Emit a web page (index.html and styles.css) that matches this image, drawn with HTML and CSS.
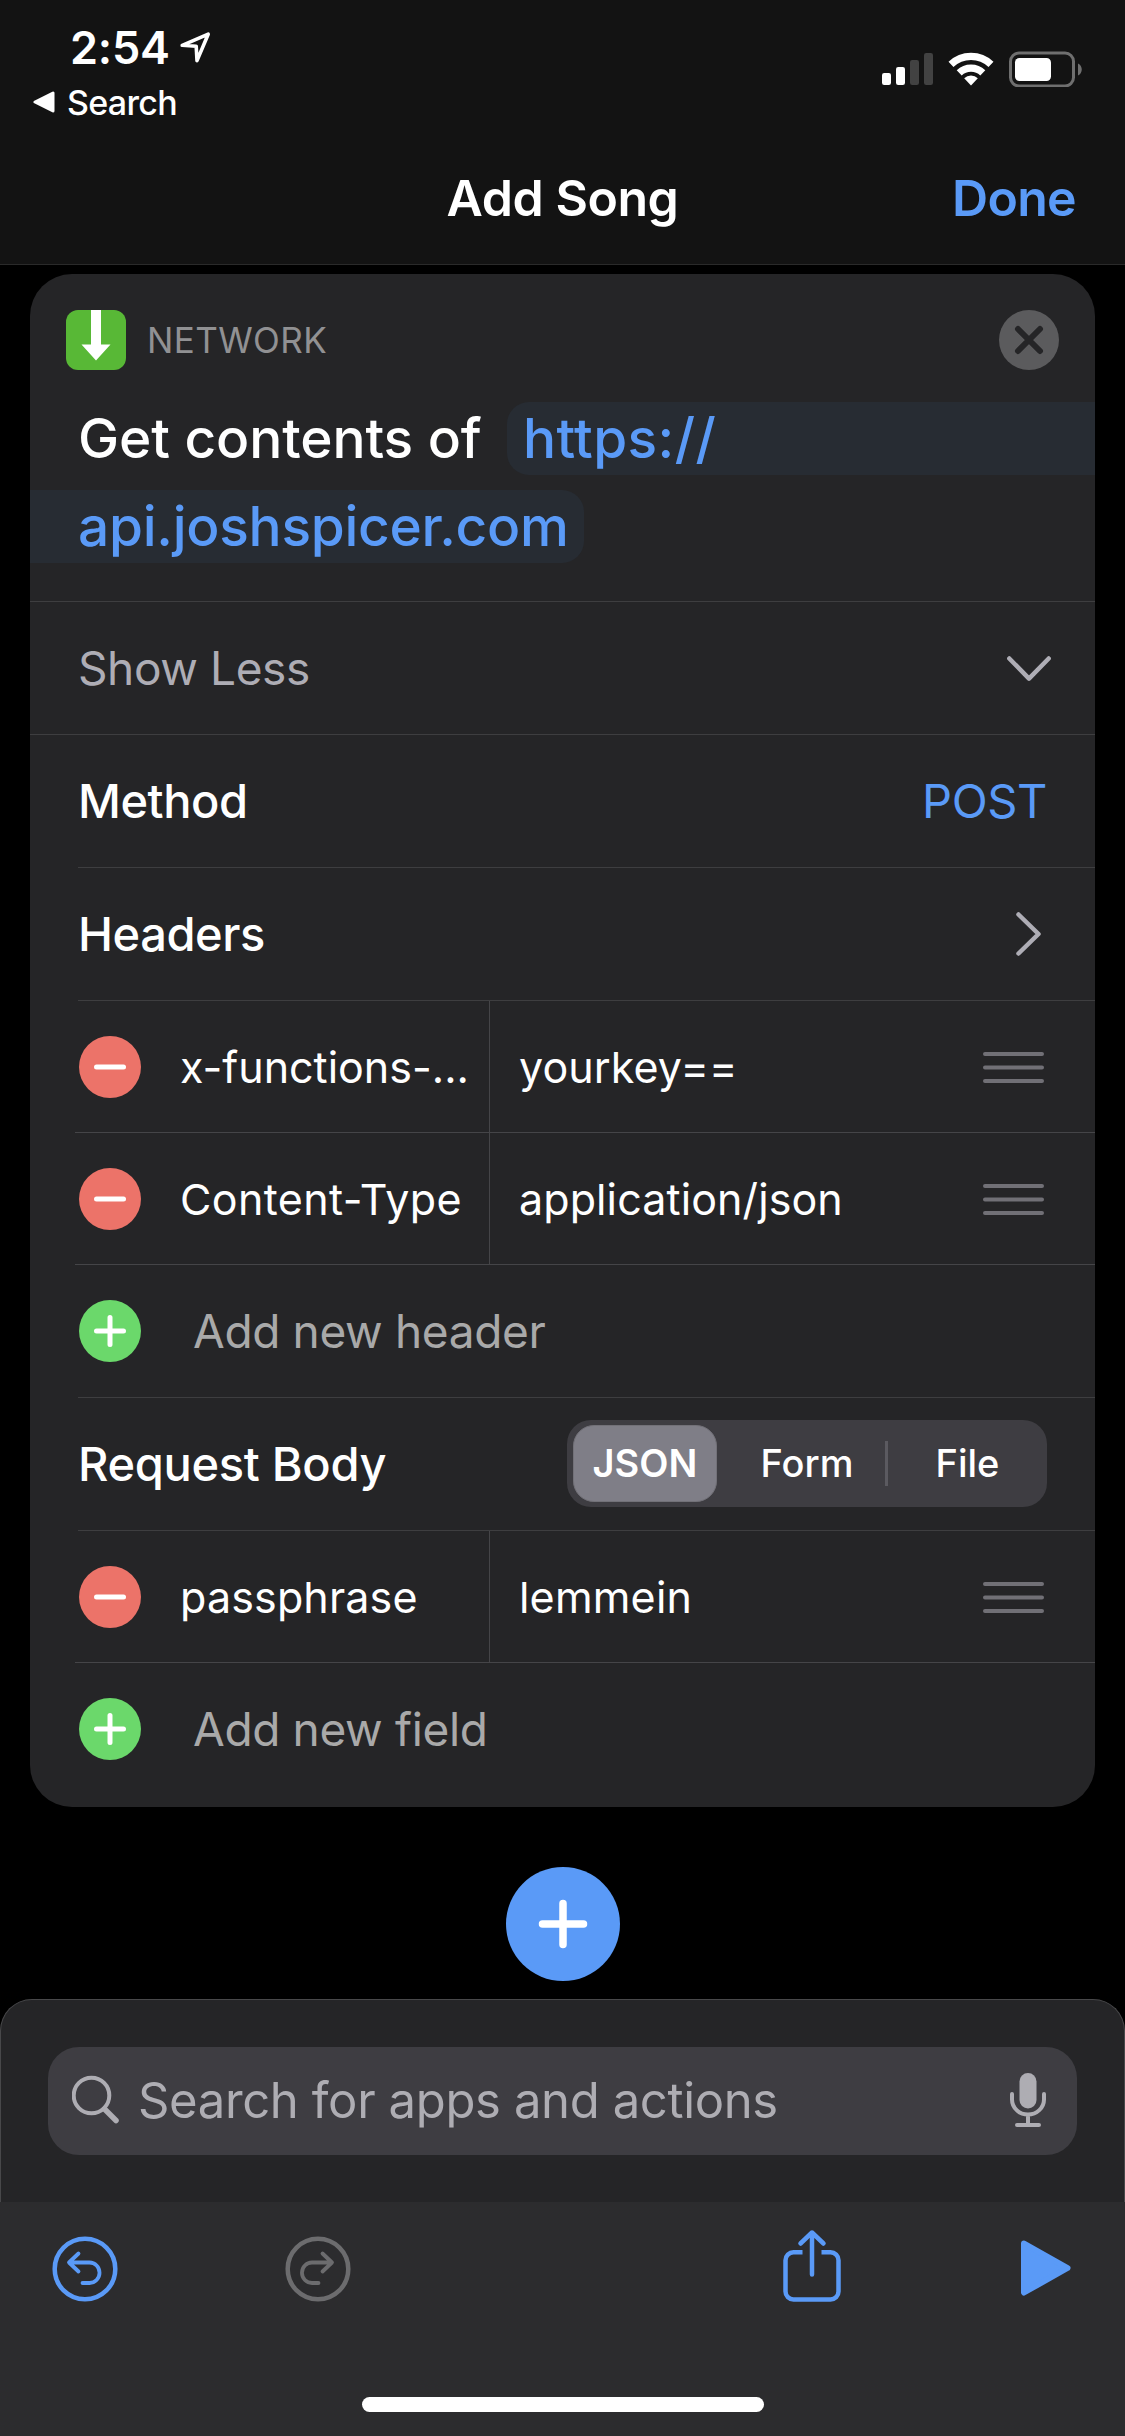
FILE: index.html
```html
<!DOCTYPE html>
<html lang="en">
<head>
<meta charset="utf-8">
<title>Add Song</title>
<link rel="stylesheet" href="styles.css">
</head>
<body>
<svg class="defs" aria-hidden="true">
  <symbol id="minus" viewBox="0 0 62 62"><circle cx="31" cy="31" r="31" fill="#ec7369"/><path d="M17.5 31h27" stroke="#fff" stroke-width="5" stroke-linecap="round"/></symbol>
  <symbol id="plus" viewBox="0 0 62 62"><circle cx="31" cy="31" r="31" fill="#6bd86b"/><path d="M17.5 31h27M31 17.5v27" stroke="#fff" stroke-width="5" stroke-linecap="round"/></symbol>
  <symbol id="drag" viewBox="0 0 61 31"><path d="M2 2h57M2 15.5h57M2 29h57" stroke="#717076" stroke-width="4" stroke-linecap="round"/></symbol>
</svg>
<header class="header">
  <div class="status">
    <div class="status-left">
      <div class="clock"><span>2:54</span>
        <svg width="32" height="32" viewBox="0 0 32 32" fill="none" stroke="#fff" stroke-width="3.6" stroke-linejoin="round"><path d="M2.2 14.3 28.2 3.2 17 29.600 16.200 15.200Z"/></svg>
      </div>
      <div class="back">
        <svg width="22" height="22" viewBox="0 0 22 22"><path d="M2 11 20 2v18Z" fill="#fff" stroke="#fff" stroke-width="3" stroke-linejoin="round"/></svg>
        <span>Search</span>
      </div>
    </div>
    <div class="status-right">
      <svg width="51" height="32" viewBox="0 0 51 32"><g fill="#fff"><rect y="20" width="9" height="12" rx="2.2"/><rect x="14" y="14" width="9" height="18" rx="2.2"/></g><g fill="#424242"><rect x="28" y="7" width="9" height="25" rx="2.2"/><rect x="42" width="9" height="32" rx="2.2"/></g></svg>
      <svg class="wifi" width="46" height="34" viewBox="0 0 46 34"><g fill="none" stroke="#fff" stroke-width="7.2"><path d="M3 12.3a29 29 0 0 1 40 0"/><path d="M11.2 20.8a17 17 0 0 1 23.6 0"/></g><path d="M23 33.5 16.2 26.2a9.6 9.6 0 0 1 13.6 0Z" fill="#fff"/></svg>
      <svg width="74" height="36" viewBox="0 0 74 36"><rect x="1.5" y="2" width="63" height="33" rx="8.5" fill="none" stroke="#6f6f6f" stroke-width="3"/><rect x="6" y="7" width="36" height="23" rx="4.5" fill="#fff"/><path d="M69 12.5c5 2 5 10 0 12Z" fill="#6f6f6f"/></svg>
    </div>
  </div>
  <div class="titlebar">
    <h1 class="title">Add Song</h1>
    <span class="done">Done</span>
  </div>
</header>

<main class="card">
  <div class="card-head">
    <svg width="60" height="60" viewBox="0 0 60 60"><rect width="60" height="60" rx="12" fill="#58b836"/><path d="M25 0h10v34.5h9.5L30 50.500 15.500 34.500H25Z" fill="#fff"/></svg>
    <span class="category">NETWORK</span>
    <svg class="close" width="60" height="60" viewBox="0 0 60 60"><circle cx="30" cy="30" r="30" fill="#5b5b5d"/><path d="M19 19l22 22M41 19 19 41" stroke="#252527" stroke-width="6" stroke-linecap="round"/></svg>
  </div>
  <div class="summary">
    <div class="summary-line"><span class="lead">Get contents of</span><span class="chip chip-start">https://</span></div>
    <div class="summary-line"><span class="chip chip-end">api.joshspicer.com</span></div>
  </div>
  <div class="row full">
    <span class="toggle">Show Less</span>
    <svg class="down" width="44" height="26" viewBox="0 0 44 26" fill="none" stroke="#aeadb5" stroke-width="4.500" stroke-linecap="round" stroke-linejoin="round"><path d="M2.300 2.500 22 22.600 41.700 2.500"/></svg>
  </div>
  <div class="row full"><span class="label">Method</span><span class="value-link">POST</span></div>
  <div class="row"><span class="label headers">Headers</span>
    <svg class="right" width="25" height="44" viewBox="0 0 25 44" fill="none" stroke="#aeadb5" stroke-width="4.500" stroke-linecap="round" stroke-linejoin="round"><path d="M2.500 2.500 22.500 22 2.500 41.500"/></svg>
  </div>
  <div class="row pair short">
    <svg class="badge"><use href="#minus"/></svg><span class="key k1">x-functions-...</span><span class="val">yourkey==</span><svg class="drag"><use href="#drag"/></svg>
  </div>
  <div class="row pair short wide">
    <svg class="badge"><use href="#minus"/></svg><span class="key k2">Content-Type</span><span class="val">application/json</span><svg class="drag"><use href="#drag"/></svg>
  </div>
  <div class="row wide">
    <svg class="badge"><use href="#plus"/></svg><span class="add">Add new header</span>
  </div>
  <div class="row">
    <span class="label body-label">Request Body</span>
    <div class="segments">
      <span class="segment selected">JSON</span><span class="segment form">Form</span><span class="segment file">File</span>
    </div>
  </div>
  <div class="row pair short">
    <svg class="badge"><use href="#minus"/></svg><span class="key k3">passphrase</span><span class="val v3">lemmein</span><svg class="drag"><use href="#drag"/></svg>
  </div>
  <div class="row wide">
    <svg class="badge"><use href="#plus"/></svg><span class="add">Add new field</span>
  </div>
</main>

<div class="add-action">
  <svg width="114" height="114" viewBox="0 0 114 114"><circle cx="57" cy="57" r="57" fill="#5a9af7"/><path d="M36.500 57h41M57 36.500v41" stroke="#fff" stroke-width="7.500" stroke-linecap="round"/></svg>
</div>

<section class="drawer">
  <div class="search">
    <svg width="48" height="50" viewBox="0 0 48 50" fill="none" stroke="#aeadb3" stroke-linecap="round"><circle cx="19.500" cy="20.500" r="17.800" stroke-width="4"/><path d="M32.500 34 44 45.500" stroke-width="5.500"/></svg>
    <span>Search for apps and actions</span>
    <svg class="mic" width="36" height="56" viewBox="0 0 36 56"><rect x="9.500" y="1" width="17" height="35.500" rx="8.500" fill="#aeadb3"/><path d="M2 22v5.500a16 15 0 0 0 32 0V22M18 43v9M7 53h22" fill="none" stroke="#aeadb3" stroke-width="4" stroke-linecap="round"/></svg>
  </div>
</section>

<footer class="footer">
  <div class="tools">
    <svg class="undo" width="66" height="66" viewBox="0 0 66 66" fill="none" stroke="#5a9af7" stroke-width="4.500" stroke-linecap="round" stroke-linejoin="round"><circle cx="33" cy="33" r="30.300"/><path d="M26.500 17.500 17 26.500 26.500 35.500M18 26.500H37.500a9.800 10 0 0 1 0 20.500H30.500" stroke-width="3.800"/></svg>
    <svg class="redo" width="66" height="66" viewBox="0 0 66 66" fill="none" stroke="#6c6c6e" stroke-width="4.500" stroke-linecap="round" stroke-linejoin="round"><circle cx="33" cy="33" r="30.300"/><path d="M37.500 17.500 47 26.500 37.500 35.500M46 26.500H27a9.800 10 0 0 0 0 20.500H33.500" stroke-width="3.800"/></svg>
    <svg class="share" width="58" height="74" viewBox="0 0 58 74" fill="none" stroke="#5a9af7" stroke-width="4.500"><path d="M19.500 23.300H10.500a8 8 0 0 0-8 8V62.500a8 8 0 0 0 8 8h37a8 8 0 0 0 8-8V31.300a8 8 0 0 0-8-8H38.500"/><path d="M29 3.500V45.500M17.500 14.500 29 3.500 40.500 14.500" stroke-linecap="round" stroke-linejoin="round"/></svg>
    <svg class="play" width="50" height="56" viewBox="0 0 50 56"><path d="M3 3.500 46.500 28 3 52.500Z" fill="#5a9af7" stroke="#5a9af7" stroke-width="6" stroke-linejoin="round"/></svg>
  </div>
  <div class="home"></div>
</footer>
</body>
</html>
```
FILE: styles.css
```css
* { box-sizing: border-box; }

body {
  margin: 0;
  width: 1125px;
  height: 2436px;
  display: flex;
  flex-direction: column;
  overflow: hidden;
  background: #000;
  color: #fff;
  font-family: Inter, "Liberation Sans", sans-serif;
}

svg { display: block; flex: none; }
span { white-space: nowrap; }
.defs { position: absolute; width: 0; height: 0; }

/* status bar and navigation */
.header {
  height: 265px;
  background: #131313;
  border-bottom: 1px solid #2a2a2a;
}
.status {
  height: 132px;
  display: flex;
  justify-content: space-between;
}
.status-left { padding-top: 20px; }
.clock {
  display: flex;
  align-items: center;
  gap: 10px;
  height: 54px;
  padding-left: 70px;
  font-size: 45px;
  font-weight: 600;
  letter-spacing: -0.23px;
}
.back {
  display: flex;
  align-items: center;
  gap: 12px;
  height: 40px;
  margin-top: 8px;
  padding-left: 33px;
  font-size: 34px;
  font-weight: 500;
  letter-spacing: -0.7px;
}
.status-right {
  display: flex;
  align-items: flex-start;
  padding: 51px 42px 0 0;
}
.status-right svg:first-child { margin-top: 2px; }
.wifi { margin: 1px 15px 0; }
.titlebar {
  height: 132px;
  display: grid;
  grid-template-columns: 1fr auto 1fr;
  align-items: center;
  padding-right: 49px;
  padding-left: 49px;
  font-size: 50px;
  font-weight: 600;
}
.title {
  grid-column: 2;
  margin: 0;
  font-size: 50px;
  font-weight: 600;
  letter-spacing: -0.45px;
}
.done {
  justify-self: end;
  color: #5a9af7;
  letter-spacing: -0.7px;
}

/* action card */
.card {
  height: 1533px;
  margin: 9px 30px 0;
  padding-top: 36px;
  border-radius: 42px;
  overflow: hidden;
  background: #252527;
}
.card-head {
  height: 60px;
  padding: 0 36px;
  display: flex;
  align-items: center;
}
.category {
  margin-left: 21px;
  color: #919193;
  font-size: 35px;
  letter-spacing: 0.4px;
}
.close { margin-left: auto; }
.summary {
  display: flex;
  flex-direction: column;
  gap: 15px;
  padding: 32px 0 38px;
  font-size: 55px;
  font-weight: 500;
  line-height: 73px;
}
.summary-line { display: flex; height: 73px; }
.lead {
  width: 477px;
  padding-left: 48px;
  letter-spacing: -0.1px;
}
.chip { background: #272c33; color: #5a9af7; }
.chip-start {
  flex: 1;
  padding-left: 16px;
  border-radius: 22px 0 0 22px;
  letter-spacing: 0.4px;
}
.chip-end {
  width: 554px;
  padding-left: 48px;
  border-radius: 0 22px 22px 0;
  letter-spacing: -0.27px;
}

/* parameter rows */
.row {
  height: 133px;
  margin-left: 48px;
  display: flex;
  align-items: center;
  border-top: 1px solid #3e3e40;
}
.row.short { height: 132px; }
.row.full { margin-left: 0; padding-left: 48px; }
.row.wide { margin-left: 45px; padding-left: 3px; border-color: #454548; }
.toggle {
  color: #aeadb5;
  font-size: 46px;
  letter-spacing: -0.4px;
}
.down { margin: 2px 44px 0 auto; }
.label {
  margin-top: -2px;
  font-size: 47px;
  font-weight: 550;
  letter-spacing: -0.45px;
}
.body-label { letter-spacing: -0.3px; }
.value-link {
  margin: -2px 48px 0 auto;
  color: #5a9af7;
  font-size: 47px;
  letter-spacing: -0.37px;
}
.right { margin: 0 54px 0 auto; }
.badge { width: 62px; height: 62px; margin-left: 1px; }
.key, .val { font-size: 43px; }
.key {
  align-self: stretch;
  display: flex;
  align-items: center;
  width: 349px;
  padding-left: 39px;
  border-right: 1px solid #454548;
}
.k2 { letter-spacing: 0.4px; }
.k3 { letter-spacing: 0.15px; }
.val { margin-left: 29px; letter-spacing: 0.1px; }
.v3 { letter-spacing: 0.2px; }
.drag { width: 61px; height: 31px; margin: 2px 51px 0 auto; }
.add {
  margin-left: 52px;
  color: #a9a9a9;
  font-size: 46px;
  letter-spacing: -0.35px;
}
.segments {
  width: 480px;
  height: 87px;
  margin: -2px 48px 0 auto;
  display: grid;
  grid-template-columns: repeat(3, 1fr);
  align-items: center;
  border-radius: 24px;
  background: #3e3d42;
  font-size: 38px;
  font-weight: 500;
  line-height: 40px;
  text-align: center;
}
.selected {
  height: 77px;
  margin: 0 10px 0 6px;
  border: 1px solid #727178;
  border-radius: 21px;
  background: #7f7e87;
  font-weight: 600;
  line-height: 75px;
  letter-spacing: 0;
}
.form { letter-spacing: 0; }
.file {
  height: 45px;
  margin-left: -2px;
  border-left: 3px solid #5b5a60;
  line-height: 45px;
}

.add-action {
  display: flex;
  justify-content: center;
  padding: 60px 0 18px;
}

/* search drawer */
.drawer {
  height: 203px;
  padding: 47px 47px 0;
  border: 1px solid #48484a;
  border-bottom: 0;
  border-radius: 32px 32px 0 0;
  background: #252527;
}
.search {
  height: 108px;
  padding: 0 31px 2px 24px;
  display: flex;
  align-items: center;
  border-radius: 31px;
  background: #3e3d42;
  color: #aeadb3;
  font-size: 49px;
}
.search span {
  margin-left: 18px;
  letter-spacing: -0.37px;
}
.mic { margin-left: auto; }

/* bottom toolbar */
.footer { height: 234px; background: #2c2c2e; }
.tools { height: 134px; display: flex; align-items: center; }
.undo { margin: -1px 0 0 52px; }
.redo { margin: -1px 0 0 167px; }
.share { margin: -6px 0 0 432px; }
.play { margin: -3px 0 0 180px; }
.home {
  width: 402px;
  height: 15px;
  margin: 61px auto 0;
  border-radius: 8px;
  background: #fff;
}
```
